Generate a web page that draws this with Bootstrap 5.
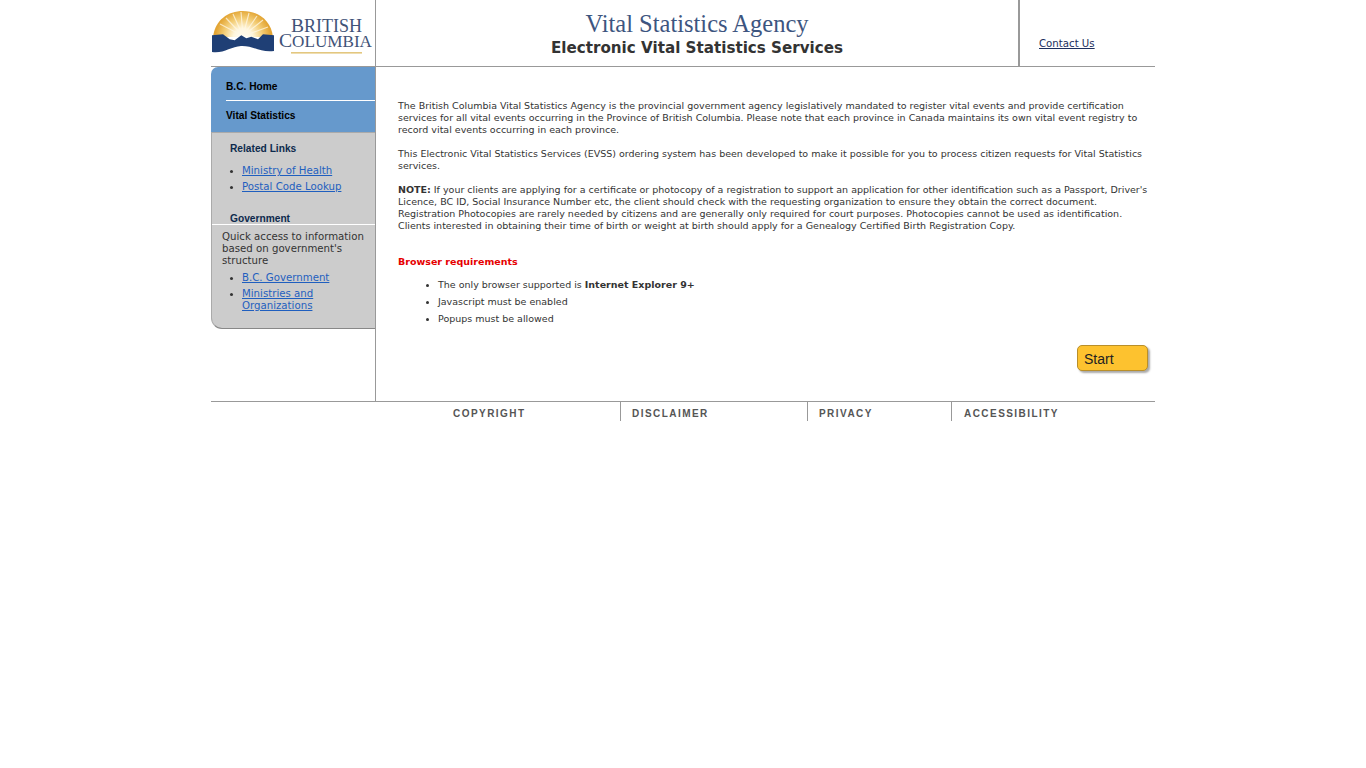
<!DOCTYPE html>
<html lang="en">
<head>
<meta charset="utf-8">
<title>Vital Statistics Agency</title>
<link rel="stylesheet" href="https://cdn.jsdelivr.net/npm/bootstrap@5.3.0/dist/css/bootstrap.min.css">
<style>
html,body{background:#fff}
body{font-family:"DejaVu Sans",Verdana,sans-serif;font-size:9.5px;line-height:12px;color:#333}
.vs-page{width:944px;margin-left:211px}
.vs-head{height:67px;border-bottom:1px solid #999}
.vs-logo{width:165px;border-right:1px solid #999}
.vs-logo svg{display:block}
.vs-title{width:644px;border-right:2px solid #999;text-align:center;padding-top:9px}
.vs-t1{font-family:"Liberation Serif",serif;font-size:24.5px;line-height:29px;color:#3d5580}
.vs-t2{font-size:15.15px;line-height:17px;font-weight:700;color:#333;margin-top:2px}
.vs-contact{padding:38px 0 0 19px;font-size:10.2px}
.vs-contact a{color:#1c2f5e;line-height:12px}
.vs-body{height:334px}
.vs-side{width:165px;border-right:1px solid #999}
.vs-blue{height:66px;background:#6699cc;border-top-left-radius:7px;color:#000;font:700 10.2px/12px "Liberation Sans",sans-serif;border-bottom:1px solid #aaa}
.vs-b1{height:34px;padding-top:14px;margin-left:15px;border-bottom:1px solid #fff;margin-bottom:9px}
.vs-b2{padding-left:15px}
.vs-gray{height:196px;background:#ccc;border-bottom:1px solid #888;border-left:1px solid #aaa;border-bottom-left-radius:11px;color:#333;overflow:hidden;font-size:10.2px}
.vs-h{font:700 10.2px/12px "Liberation Sans",sans-serif;color:#0d2a4d;padding-left:18px}
.vs-gray ul{margin:0;padding-left:30px;list-style:disc}
.vs-gray li{margin-bottom:4px}
.vs-gray li::marker{font-size:9px}
.vs-gray a{color:#1f5fbf}
.vs-s1{height:92px;border-bottom:1px solid #fff;padding-top:10px}
.vs-s1 ul{margin-top:10px}
.vs-s1 .vs-g{margin-top:20px}
.vs-s2 p{margin:6px 0 5px 10px;width:150px}
.vs-main{padding:33px 6px 0 22px;flex:1;min-width:0}
.vs-main p{margin:0 0 12px}
.vs-req{color:#e60000;font-weight:700;margin-top:24px!important;margin-bottom:11px!important}
.vs-main ul{margin:0;padding-left:40px}
.vs-main li{margin-bottom:5px}
.vs-main li::marker{font-size:9px}
.vs-start{width:71px;height:26px;background:#fdc22f;border:1px solid #b98f2a;border-radius:5px;box-shadow:2px 2px 2px #aaa;color:#222;font:14px/27px "Liberation Sans",sans-serif;padding-left:6px;text-decoration:none;display:block}
.vs-startrow{margin:20px 1px 0 0}
.vs-foot{border-top:1px solid #999;height:20px;padding-left:165px;font:700 10px/24px "Liberation Sans",sans-serif;letter-spacing:1.45px;color:#555}
.vs-foot span{display:block;height:20px;white-space:nowrap}
.vs-f1{width:245px;border-right:1px solid #999;padding-left:77px}
.vs-f2{width:187px;border-right:1px solid #999;padding-left:11px}
.vs-f3{width:144px;border-right:1px solid #999;padding-left:11px}
.vs-f4{padding-left:12px}
</style>
</head>
<body>
<div class="vs-page">
  <div class="vs-head d-flex">
    <div class="vs-logo">
      <svg width="164" height="66" viewBox="0 0 164 66">
        <defs>
          <radialGradient id="vssun" gradientUnits="userSpaceOnUse" cx="32" cy="38" r="28">
            <stop offset="0" stop-color="#ffffff"/>
            <stop offset=".35" stop-color="#fff6dc"/>
            <stop offset=".7" stop-color="#f3cd76"/>
            <stop offset="1" stop-color="#e3a534"/>
          </radialGradient>
        </defs>
        <path d="M2 37 C4 20 17 11 32 11 C47 11 60 20 62 37 Z" fill="url(#vssun)"/>
        <g stroke="#fff8e6" stroke-width="1.2" opacity=".75">
          <path d="M32 36 L9 24 M32 36 L15 18 M32 36 L22 14 M32 36 L30 12 M32 36 L38 13 M32 36 L46 16 M32 36 L52 20 M32 36 L57 27"/>
        </g>
        <path d="M1 35.3 L12 34.3 L18.7 39.3 L23.7 40.3 L30.3 35.3 L35.3 38.3 L40.3 36.7 L47 39.3 L52 34.3 L63 35.3 L63 51 C50 53 42 45.5 30 46 C20 46.5 12 54 1 52 Z" fill="#1f3f75"/>
        <text x="80" y="32" font-family="Liberation Serif,serif" font-size="18" textLength="71" lengthAdjust="spacingAndGlyphs" fill="#3f5378"><tspan font-size="19.5">B</tspan>RITISH</text>
        <text x="68" y="46.5" font-family="Liberation Serif,serif" font-size="17" textLength="93" lengthAdjust="spacingAndGlyphs" fill="#3f5378"><tspan font-size="19.5">C</tspan>OLUMBIA</text>
        <rect x="80" y="52" width="71" height="1.6" fill="#e3c77f"/>
      </svg>
    </div>
    <div class="vs-title">
      <div class="vs-t1">Vital Statistics Agency</div>
      <div class="vs-t2">Electronic Vital Statistics Services</div>
    </div>
    <div class="vs-contact"><a href="#">Contact Us</a></div>
  </div>
  <div class="vs-body d-flex">
    <div class="vs-side">
      <div class="vs-blue">
        <div class="vs-b1">B.C. Home</div>
        <div class="vs-b2">Vital Statistics</div>
      </div>
      <div class="vs-gray">
        <div class="vs-s1">
          <div class="vs-h">Related Links</div>
          <ul><li><a href="#">Ministry of Health</a></li><li><a href="#">Postal Code Lookup</a></li></ul>
          <div class="vs-h vs-g">Government</div>
        </div>
        <div class="vs-s2">
          <p>Quick access to information based on government's structure</p>
          <ul><li><a href="#">B.C. Government</a></li><li><a href="#">Ministries and<br>Organizations</a></li></ul>
        </div>
      </div>
    </div>
    <div class="vs-main">
      <p>The British Columbia Vital Statistics Agency is the provincial government agency legislatively mandated to register vital events and provide certification services for all vital events occurring in the Province of British Columbia. Please note that each province in Canada maintains its own vital event registry to record vital events occurring in each province.</p>
      <p>This Electronic Vital Statistics Services (EVSS) ordering system has been developed to make it possible for you to process citizen requests for Vital Statistics services.</p>
      <p><b>NOTE:</b> If your clients are applying for a certificate or photocopy of a registration to support an application for other identification such as a Passport, Driver's Licence, BC ID, Social Insurance Number etc, the client should check with the requesting organization to ensure they obtain the correct document. Registration Photocopies are rarely needed by citizens and are generally only required for court purposes. Photocopies cannot be used as identification. Clients interested in obtaining their time of birth or weight at birth should apply for a Genealogy Certified Birth Registration Copy.</p>
      <p class="vs-req">Browser requirements</p>
      <ul>
        <li>The only browser supported is <b>Internet Explorer 9+</b></li>
        <li>Javascript must be enabled</li>
        <li>Popups must be allowed</li>
      </ul>
      <div class="vs-startrow d-flex justify-content-end"><a class="vs-start" href="#">Start</a></div>
    </div>
  </div>
  <div class="vs-foot d-flex">
    <span class="vs-f1">COPYRIGHT</span><span class="vs-f2">DISCLAIMER</span><span class="vs-f3">PRIVACY</span><span class="vs-f4">ACCESSIBILITY</span>
  </div>
</div>
</body>
</html>
